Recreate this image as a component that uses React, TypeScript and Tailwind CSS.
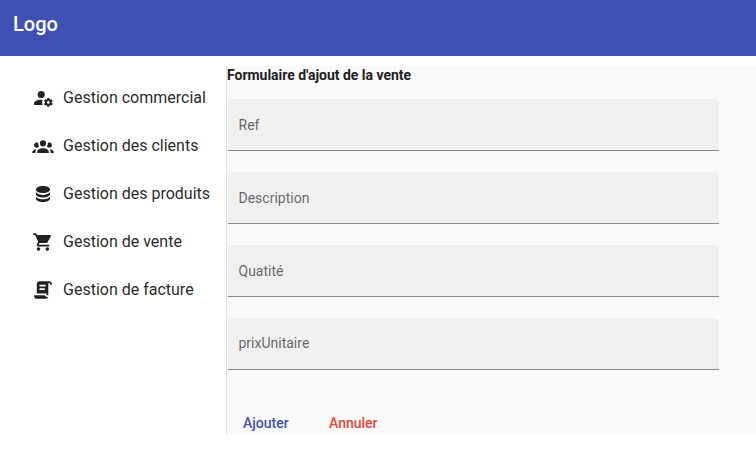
const icons = {
  commercial:
    "M10 4A4 4 0 0 0 6 8A4 4 0 0 0 10 12A4 4 0 0 0 14 8A4 4 0 0 0 10 4M17 12C16.87 12 16.76 12.09 16.74 12.21L16.55 13.53C16.25 13.66 15.96 13.82 15.7 14L14.46 13.5C14.35 13.5 14.22 13.5 14.15 13.63L13.15 15.36C13.09 15.47 13.11 15.6 13.21 15.68L14.27 16.5C14.25 16.67 14.24 16.83 14.24 17C14.24 17.17 14.25 17.33 14.27 17.5L13.21 18.32C13.12 18.4 13.09 18.53 13.15 18.64L14.15 20.37C14.21 20.5 14.34 20.5 14.46 20.5L15.7 20C15.96 20.18 16.24 20.35 16.55 20.47L16.74 21.79C16.76 21.91 16.86 22 17 22H19C19.11 22 19.22 21.91 19.24 21.79L19.43 20.47C19.73 20.34 20 20.18 20.27 20L21.5 20.5C21.63 20.5 21.76 20.5 21.83 20.37L22.83 18.64C22.89 18.53 22.86 18.4 22.77 18.32L21.7 17.5C21.72 17.33 21.74 17.17 21.74 17C21.74 16.83 21.73 16.67 21.7 16.5L22.76 15.68C22.85 15.6 22.88 15.47 22.82 15.36L21.82 13.63C21.76 13.5 21.63 13.5 21.5 13.5L20.27 14C20 13.82 19.73 13.65 19.42 13.53L19.23 12.21C19.22 12.09 19.11 12 19 12H17M10 14C5.58 14 2 15.79 2 18V20H11.68A7 7 0 0 1 11 17A7 7 0 0 1 11.64 14.09C11.11 14.03 10.56 14 10 14M18 15.5A1.5 1.5 0 0 1 18 18.5A1.5 1.5 0 0 1 18 15.5Z",
  clients:
    "M12,5.5A3.5,3.5 0 0,1 15.5,9A3.5,3.5 0 0,1 12,12.5A3.5,3.5 0 0,1 8.5,9A3.5,3.5 0 0,1 12,5.5M5,8C5.56,8 6.08,8.15 6.53,8.42C6.38,9.85 6.8,11.27 7.66,12.38C7.16,13.34 6.16,14 5,14A3,3 0 0,1 2,11A3,3 0 0,1 5,8M19,8A3,3 0 0,1 22,11A3,3 0 0,1 19,14C17.84,14 16.84,13.34 16.34,12.38C17.2,11.27 17.62,9.85 17.47,8.42C17.92,8.15 18.44,8 19,8M5.5,18.25C5.5,16.18 8.41,14.5 12,14.5C15.59,14.5 18.5,16.18 18.5,18.25V20H5.5V18.25M0,20V18.5C0,17.11 1.89,15.94 4.45,15.6C3.86,16.28 3.5,17.22 3.5,18.25V20H0M24,20H20.5V18.25C20.5,17.22 20.14,16.28 19.55,15.6C22.11,15.94 24,17.11 24,18.5V20Z",
  produits:
    "M12,3C7.58,3 4,4.79 4,7C4,9.21 7.58,11 12,11C16.42,11 20,9.21 20,7C20,4.79 16.42,3 12,3M4,9V12C4,14.21 7.58,16 12,16C16.42,16 20,14.21 20,12V9C20,11.21 16.42,13 12,13C7.58,13 4,11.21 4,9M4,14V17C4,19.21 7.58,21 12,21C16.42,21 20,19.21 20,17V14C20,16.21 16.42,18 12,18C7.58,18 4,16.21 4,14Z",
  vente:
    "M17,18A2,2 0 0,1 19,20A2,2 0 0,1 17,22C15.89,22 15,21.1 15,20C15,18.89 15.89,18 17,18M1,2H4.27L5.21,4H20A1,1 0 0,1 21,5C21,5.17 20.95,5.34 20.88,5.5L17.3,11.97C16.96,12.58 16.3,13 15.55,13H8.1L7.2,14.63L7.17,14.75A0.25,0.25 0 0,0 7.42,15H19V17H7C5.89,17 5,16.1 5,15C5,14.65 5.09,14.32 5.24,14.04L6.6,11.59L3,4H1V2M7,18A2,2 0 0,1 9,20A2,2 0 0,1 7,22C5.89,22 5,21.1 5,20C5,18.89 5.89,18 7,18Z",
  facture:
    "M17.8,20C17.4,21.2 16.3,22 15,22H5C3.3,22 2,20.7 2,19V18H14.2C14.6,19.2 15.7,20 17,20H17.8M19,2C20.7,2 22,3.3 22,5V6H20V5C20,4.4 19.6,4 19,4C18.4,4 18,4.4 18,5V18H17C16.4,18 16,17.6 16,17V16H5V5C5,3.3 6.3,2 8,2H19M8,6V8H15V6H8M8,10V12H14V10H8Z",
};

const menu = [
  { label: "Gestion commercial", icon: icons.commercial },
  { label: "Gestion des clients", icon: icons.clients },
  { label: "Gestion des produits", icon: icons.produits },
  { label: "Gestion de vente", icon: icons.vente },
  { label: "Gestion de facture", icon: icons.facture },
];

const fields = ["Ref", "Description", "Quatité", "prixUnitaire"];

export default function App() {
  return (
    <div className="h-[457px] w-[756px] overflow-hidden bg-white font-['Roboto',sans-serif] text-[#212121]">
      <header className="flex h-14 bg-[#3f51b5] pt-2 pl-[13px] text-xl leading-8 font-medium text-white">
        Logo
      </header>
      <div className="flex pt-[10px]">
        <nav className="w-[226px] shrink-0 pt-2">
          {menu.map((item) => (
            <a key={item.label} className="flex h-12 items-center pl-8">
              <svg viewBox="-0.4 -0.4 24.8 24.8" className="mt-[2px] mb-[2px] size-[22px] shrink-0" fill="#212121" fillRule="evenodd">
                <path d={item.icon} />
              </svg>
              <span className="ml-[9px] text-base whitespace-nowrap text-black/87">{item.label}</span>
            </a>
          ))}
        </nav>
        <main className="h-[368px] flex-1 overflow-hidden border-l border-[#e0e0e0] bg-[#fafafa]">
          <h1 className="text-sm leading-[18px] font-bold tracking-[-0.02px]">Formulaire d'ajout de la vente</h1>
          <form className="ml-px pt-[15px]">
            {fields.map((field) => (
              <label
                key={field}
                className="mb-[21px] flex h-[52px] w-[491px] items-center rounded-t border-b border-[#8b8b8b] bg-[#f0f0f0] pl-[10.5px] text-sm text-black/60 last-of-type:pb-px"
              >
                {field}
              </label>
            ))}
            <div className="flex pt-[22px] pl-[15px] text-sm leading-5 font-medium">
              <button type="button" className="w-[86px] text-left text-[#3f51b5]">Ajouter</button>
              <button type="button" className="text-[#f44336]">Annuler</button>
            </div>
          </form>
        </main>
      </div>
    </div>
  );
}
